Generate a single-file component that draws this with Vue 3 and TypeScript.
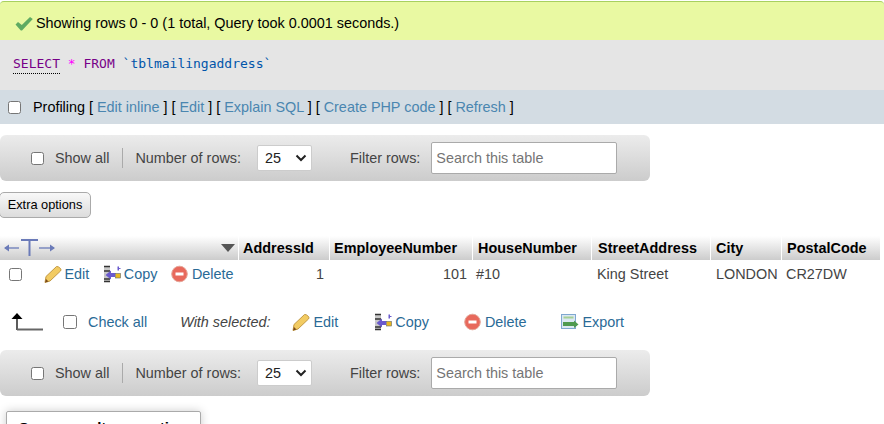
<script setup lang="ts">
const columns = [
  { name: 'AddressId', width: 91, pad: 4 },
  { name: 'EmployeeNumber', width: 143, pad: 4 },
  { name: 'HouseNumber', width: 119, pad: 5 },
  { name: 'StreetAddress', width: 119, pad: 6 },
  { name: 'City', width: 71, pad: 5 },
  { name: 'PostalCode', width: 99, pad: 5 },
]
const row = [
  { value: '1', num: true, pad: 6 },
  { value: '101', num: true, pad: 6 },
  { value: '#10', num: false, pad: 3 },
  { value: 'King Street', num: false, pad: 5 },
  { value: 'LONDON', num: false, pad: 5 },
  { value: 'CR27DW', num: false, pad: 4 },
]
const navBars = ['top', 'bottom']
</script>

<template>
  <div class="page">
    <div class="success">
      <svg class="check" width="18" height="15" viewBox="0 0 18 15">
        <path d="M0.500 8.500 L3 6 L6.800 9 L15 1 L17.800 3 L7 14.500 L5.800 14.500 Z" fill="#5fab62" />
      </svg>
      <span>Showing rows 0 - 0 (1 total, Query took 0.0001 seconds.)</span>
    </div>
    <div class="sql">
      <span class="kw dotted">SELECT</span> <span class="star">*</span> <span class="kw">FROM</span> <span class="ident">`tblmailingaddress`</span>
    </div>
    <div class="profiling">
      <input type="checkbox" class="cb prof-cb" />
      <span>Profiling</span>
      <span class="links">[ <a>Edit inline</a> ] [ <a>Edit</a> ] [ <a>Explain SQL</a> ] [ <a>Create PHP code</a> ] [ <a>Refresh</a> ]</span>
    </div>

    <template v-for="bar in navBars" :key="bar">
      <div class="nav" :class="bar">
        <input type="checkbox" class="cb" />
        <span class="show-all">Show all</span>
        <span class="sep"></span>
        <span class="num-label">Number of rows:</span>
        <div class="select">
          <span>25</span>
          <svg width="12" height="8" viewBox="0 0 12 8"><path d="M1.500 1.500 L6 6 L10.500 1.500" fill="none" stroke="#222" stroke-width="2" /></svg>
        </div>
        <span class="filter-label">Filter rows:</span>
        <input class="search" placeholder="Search this table" />
      </div>

      <template v-if="bar === 'top'">
        <button class="extra">Extra options</button>

        <div class="thead">
          <div class="th first">
            <svg width="56" height="24" viewBox="0 0 56 24">
              <g fill="none" stroke="#6a7ab8">
                <path d="M5 12 H19" stroke-width="1.300" />
                <path d="M21 4 H38 M29.500 4 V20" stroke-width="2" />
                <path d="M39 12 H54" stroke-width="1.300" />
              </g>
              <path d="M4 12 L9 8.500 V15.500 Z M55 12 L50 8.500 V15.500 Z" fill="#6a7ab8" />
            </svg>
            <svg class="sort" width="14" height="8" viewBox="0 0 14 8"><path d="M0 0 H14 L7 8 Z" fill="#555" /></svg>
          </div>
          <div v-for="c in columns" :key="c.name" class="th" :style="{ width: c.width + 'px', paddingLeft: c.pad + 'px' }">{{ c.name }}</div>
        </div>

        <div class="tr">
          <div class="td-first">
            <input type="checkbox" class="cb" />
            <span class="act edit"><svg class="ic" width="18" height="18" viewBox="0 0 18 18"><path d="M12.500 1.500 Q14 1 16.500 3.500 Q17.500 5 16.500 6 L6 16 L1 17.500 L2 11.500 Z" fill="#f2cb62" stroke="#c39a45" stroke-width="1" /><path d="M1 17.500 L2 14 L4.500 16.500 Z" fill="#7a4a1a" /></svg><a>Edit</a></span>
            <span class="act copy"><svg class="ic" width="18" height="18" viewBox="0 0 18 18"><path d="M1 1 H7 V17 H1 Z" fill="#c8c8c8" /><path d="M1 1.500 H7 M1 6 H7 M1 14 H7 M1 16.500 H7" stroke="#333" stroke-width="1.400" /><path d="M2.500 10 L8 5.500 V8 H12 V12 H8 V14.500 Z" fill="#6a5acd" /><rect x="12.500" y="8.500" width="5" height="4.500" fill="#e8b820" stroke="#666" stroke-width=".6" /><path d="M14.500 1.500 H16 V3 H17.500 V4 H16 V5.500 H14.500 Z" fill="#6a5acd" /></svg><a>Copy</a></span>
            <span class="act del"><svg class="ic" width="18" height="18" viewBox="0 0 18 18"><circle cx="8.500" cy="9" r="7.800" fill="#e8695c" stroke="#e5a598" /><rect x="4.500" y="7.500" width="8" height="3" fill="#fff" /></svg><a>Delete</a></span>
          </div>
          <div v-for="(cell, i) in row" :key="i" class="td" :class="{ num: cell.num }" :style="cell.num ? { width: columns[i].width + 'px', paddingRight: cell.pad + 'px' } : { width: columns[i].width + 'px', paddingLeft: cell.pad + 'px' }">{{ cell.value }}</div>
        </div>

        <div class="selected">
          <svg class="arrow" width="32" height="20" viewBox="0 0 32 20"><path d="M5 6 V18" fill="none" stroke="#333" stroke-width="1.600" /><path d="M5 17.500 H31" fill="none" stroke="#666" stroke-width="2" /><path d="M5 1 L10.500 7 H-.500 Z" fill="#000" /></svg>
          <input type="checkbox" class="cb" />
          <a class="check-all">Check all</a>
          <em>With selected:</em>
          <span class="act edit"><svg class="ic" width="18" height="18" viewBox="0 0 18 18"><path d="M12.500 1.500 Q14 1 16.500 3.500 Q17.500 5 16.500 6 L6 16 L1 17.500 L2 11.500 Z" fill="#f2cb62" stroke="#c39a45" stroke-width="1" /><path d="M1 17.500 L2 14 L4.500 16.500 Z" fill="#7a4a1a" /></svg><a>Edit</a></span>
          <span class="act copy"><svg class="ic" width="18" height="18" viewBox="0 0 18 18"><path d="M1 1 H7 V17 H1 Z" fill="#c8c8c8" /><path d="M1 1.500 H7 M1 6 H7 M1 14 H7 M1 16.500 H7" stroke="#333" stroke-width="1.400" /><path d="M2.500 10 L8 5.500 V8 H12 V12 H8 V14.500 Z" fill="#6a5acd" /><rect x="12.500" y="8.500" width="5" height="4.500" fill="#e8b820" stroke="#666" stroke-width=".6" /><path d="M14.500 1.500 H16 V3 H17.500 V4 H16 V5.500 H14.500 Z" fill="#6a5acd" /></svg><a>Copy</a></span>
          <span class="act del"><svg class="ic" width="18" height="18" viewBox="0 0 18 18"><circle cx="8.500" cy="9" r="7.800" fill="#e8695c" stroke="#e5a598" /><rect x="4.500" y="7.500" width="8" height="3" fill="#fff" /></svg><a>Delete</a></span>
          <span class="act exp"><svg class="ic" width="18" height="18" viewBox="0 0 18 18"><rect x=".5" y="1.500" width="14" height="14" fill="#dbe8f3" stroke="#7fa8d0" /><rect x="2.500" y="3.500" width="10" height="2" fill="#a5cf95" /><path d="M2 9 H13 V7.500 L17.500 11.500 L13 15 V13 H2 Z" fill="#4f9a4f" /></svg><a>Export</a></span>
        </div>
      </template>
    </template>

    <div class="ops"><span>Query results operations</span></div>
  </div>
</template>

<style>
html, body { margin: 0; background: #fff; overflow: hidden; }
</style>

<style scoped>
.page { width: 884px; height: 424px; overflow: hidden; font-family: "Liberation Sans", Arial, sans-serif; font-size: 14.400px; color: #444; }
a { color: #2a6a96; }
.cb { appearance: none; -webkit-appearance: none; width: 13px; height: 13px; margin: 0; border: 1px solid #767676; border-radius: 2.500px; background: #fff; box-sizing: border-box; flex: none; }
.success { margin-top: 1px; height: 39px; box-sizing: border-box; border-top: 1px solid #a8d060; border-radius: 4px 4px 0 0; background: #e9f9a2; color: #000; display: flex; align-items: center; padding: 4px 0 0 15px; gap: 3px; }
.sql { height: 50px; box-sizing: border-box; background: #e5e5e5; padding-top: 16px; font-family: "DejaVu Sans Mono", monospace; font-size: 13px; line-height: 16px; padding-left: 13px; }
.kw { color: #770088; }
.dotted { border-bottom: 1px dotted #000; padding-bottom: 2px; }
.star { color: #ff00ff; }
.ident { color: #0055aa; }
.profiling { height: 34px; background: #d3dce3; display: flex; align-items: center; color: #000; padding-left: 8px; }
.prof-cb { margin-right: 12px; }
.links { margin-left: 4px; }
.links a { color: #4a86b0; }
.nav { width: 650px; height: 46px; box-sizing: border-box; margin-top: 11px; border-radius: 6px; background: linear-gradient(#ececec, #cccccc); display: flex; align-items: center; padding-left: 31px; color: #444; }
.show-all { margin-left: 11px; }
.sep { width: 1px; height: 20px; margin: 0 12px 0 13px; background: #aaa; flex: none; }
.select { width: 55px; height: 26px; box-sizing: border-box; margin-left: 16px; border: 1px solid #ccc; border-radius: 2px; background: #fff; color: #222; display: flex; align-items: center; justify-content: space-between; padding: 0 4px 0 7px; flex: none; }
.filter-label { margin-left: 38px; }
.search { width: 186px; height: 32px; box-sizing: border-box; margin-left: 11px; border: 1px solid #aaa; border-radius: 2px; padding: 0 4px; font: inherit; background: #fff; flex: none; }
.search::placeholder { color: #757575; opacity: 1; }
.extra { display: block; width: 92px; height: 26px; margin: 11px 0 0 -1px; padding: 0 0 2px; border: 1px solid #aaa; border-radius: 5px; background: linear-gradient(#f8f8f8, #dcdcdc); font-family: inherit; font-size: 12.800px; color: #000; }
.thead { display: flex; margin-top: 18px; height: 24px; }
.th { box-sizing: border-box; height: 24px; background: linear-gradient(#ffffff, #cccccc); border-right: 1px solid #fff; font-weight: bold; color: #000; line-height: 24px; letter-spacing: .05px; white-space: nowrap; flex: none; }
.th.first { width: 239px; display: flex; align-items: center; justify-content: space-between; padding-right: 3px; }
.tr { display: flex; height: 28px; align-items: center; }
.td-first { width: 239px; display: flex; align-items: center; padding-left: 9px; box-sizing: border-box; flex: none; }
.td-first .act { gap: 2.500px; }
.td-first .edit { margin-left: 22px; }
.td-first .copy { margin-left: 14px; }
.td-first .del { margin-left: 14px; }
.td { box-sizing: border-box; white-space: nowrap; flex: none; }
.td.num { text-align: right; }
.act { display: inline-flex; align-items: center; gap: 3px; }
.ic { flex: none; }
.selected { display: flex; align-items: center; height: 34px; margin-top: 17px; padding-left: 12px; }
.arrow { flex: none; overflow: visible; }
.selected .cb { margin-left: 19px; width: 14px; height: 14px; }
.check-all { margin-left: 11px; }
em { margin-left: 33px; }
.selected .edit { margin-left: 22px; }
.selected .copy { margin-left: 36px; }
.selected .del { margin-left: 35px; }
.selected .exp { margin-left: 35px; }
.ops { width: 195px; height: 40px; box-sizing: border-box; margin: 15px 0 0 6px; border: 1px solid #aaa; border-radius: 2px; box-shadow: 0 0 10px #ccc; padding: 7px 0 0 11px; font-weight: bold; color: #000; font-size: 15px; white-space: nowrap; }
</style>
